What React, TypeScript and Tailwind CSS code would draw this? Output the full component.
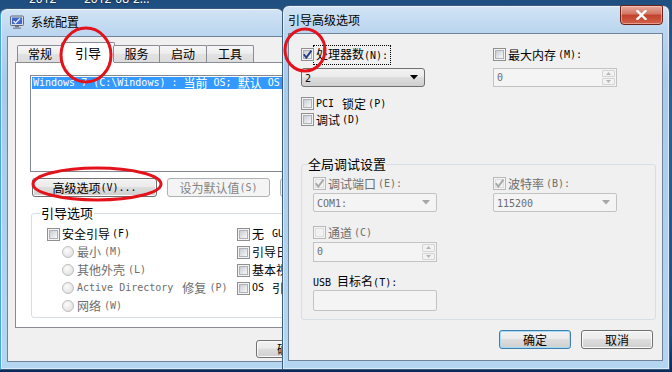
import React from "react";

const ASCII = /([\x20-\x7e]+)/;

// SimSun-like rendering: latin runs in a narrow mono face, CJK in Noto
function Tx({ s }: { s: string }) {
  return (
    <>
      {s.split(ASCII).map((p, i) =>
        i % 2 ? (
          <span key={i} className="whitespace-pre font-['DejaVu_Sans_Mono',monospace] text-[10px]">
            {p}
          </span>
        ) : (
          p
        )
      )}
    </>
  );
}

function Box({ on = false, off = false }: { on?: boolean; off?: boolean }) {
  return (
    <span
      className={`relative flex h-[13px] w-[13px] shrink-0 items-center justify-center border ${
        off ? "border-[#b8b8b8] bg-[#f4f4f4]" : "border-[#8e8f8f] bg-[#f4f4f4]"
      }`}
    >
      <span
        className={`h-[9px] w-[9px] border ${
          off
            ? "border-[#dedede] bg-[#f2f2f2]"
            : "border-[#aeb2b8] bg-[linear-gradient(135deg,#c9cdd3,#f7f7f7)]"
        }`}
      />
      {on && (
        <svg className="absolute left-0 top-0" width="11" height="11" viewBox="0 0 11 11">
          <path
            d="M1.8 5.2 L4.3 8.6 L9.4 1.6"
            fill="none"
            stroke={off ? "#a8a8a8" : "#2a3d86"}
            strokeWidth="1.9"
          />
        </svg>
      )}
    </span>
  );
}

function Radio() {
  return (
    <span className="h-[12px] w-[12px] shrink-0 rounded-full border border-[#bdbdbd] bg-[radial-gradient(circle_at_40%_35%,#fcfcfc,#dadada)]" />
  );
}

function Btn({
  className = "",
  dis = false,
  def = false,
  children,
}: {
  className?: string;
  dis?: boolean;
  def?: boolean;
  children: React.ReactNode;
}) {
  return (
    <div
      className={`flex shrink-0 items-center justify-center whitespace-nowrap rounded-[3px] border ${
        dis
          ? "border-[#adb2b5] bg-[#f4f4f4] text-[#838383]"
          : def
          ? "border-[#3c7fb1] bg-[linear-gradient(to_bottom,#f2f2f2,#ebebeb_45%,#dddddd_50%,#cfcfcf)] shadow-[inset_0_0_0_1px_#a6dbf6]"
          : "border-[#707070] bg-[linear-gradient(to_bottom,#f2f2f2,#ebebeb_45%,#dddddd_50%,#cfcfcf)] shadow-[inset_0_0_0_1px_#fbfbfb]"
      } ${className}`}
    >
      {children}
    </div>
  );
}

function Combo({ v, dis = false, className = "" }: { v: string; dis?: boolean; className?: string }) {
  return (
    <div
      className={`flex h-[19px] items-center justify-between pl-[3px] pr-[6px] ${
        dis
          ? "rounded-[2px] border border-[#c3c3c3] bg-[#f4f4f4] text-[#6d6d6d]"
          : "rounded-[3px] border border-[#707070] bg-[linear-gradient(to_bottom,#f2f2f2,#ebebeb_45%,#dddddd_50%,#cfcfcf)]"
      } ${className}`}
    >
      <span>
        <Tx s={v} />
      </span>
      <svg width="8" height="5" viewBox="0 0 8 5">
        <path d="M0 0H8L4 4.5Z" fill={dis ? "#a6a6a6" : "#000"} />
      </svg>
    </div>
  );
}

function Spin({ className = "" }: { className?: string }) {
  return (
    <div className={`flex border border-[#c3c3c3] bg-[#f4f4f4] text-[#6d6d6d] ${className}`}>
      <span className="flex flex-1 items-center pl-[3px]">
        <Tx s="0" />
      </span>
      <div className="flex w-[15px] flex-col gap-[1px] p-[1px]">
        <div className="flex flex-1 items-center justify-center rounded-[1px] border border-[#d4d4d4] bg-[#f2f2f2]">
          <svg width="5" height="3" viewBox="0 0 5 3">
            <path d="M0 3H5L2.5 0Z" fill="#b5b5b5" />
          </svg>
        </div>
        <div className="flex flex-1 items-center justify-center rounded-[1px] border border-[#d4d4d4] bg-[#f2f2f2]">
          <svg width="5" height="3" viewBox="0 0 5 3">
            <path d="M0 0H5L2.5 3Z" fill="#b5b5b5" />
          </svg>
        </div>
      </div>
    </div>
  );
}

function Row({ children, className = "" }: { children: React.ReactNode; className?: string }) {
  return <div className={`flex items-center whitespace-nowrap ${className}`}>{children}</div>;
}

const frame =
  "border border-[#3a5b7e] rounded-t-[7px] bg-[linear-gradient(to_bottom,#d2e4f5,#bcd6ef_24px,#a9cbea_70px,#b4d6f1)] shadow-[inset_0_0_0_1px_rgba(255,255,255,0.55)]";

function LeftWindow() {
  const tab =
    "flex h-[17px] mb-[1px] shrink-0 items-center justify-center border border-b-0 border-[#898c95] rounded-t-[2px] bg-[linear-gradient(to_bottom,#f7f7f7,#ececec_50%,#e2e2e2_50%,#dcdcdc)]";
  return (
    <div
      className={`absolute left-0 top-[8px] flex h-[362px] w-[284px] flex-col overflow-hidden ${frame} border-l-[#4aa6de]`}
    >
      <div className="flex h-[27px] shrink-0 items-center gap-[7px] pb-[2px] pl-[9px]">
        <svg width="14" height="14" viewBox="0 0 14 14">
          <rect x="0.5" y="1" width="13" height="9.5" rx="1" fill="#d9dde3" stroke="#5e6b7a" />
          <rect x="2" y="2.5" width="10" height="6.5" fill="#3f68c8" />
          <path d="M3.5 6 L5.5 8 L10 3.5" fill="none" stroke="#e8ecff" strokeWidth="1.3" />
          <rect x="5" y="11" width="4" height="1.5" fill="#6b7684" />
          <rect x="3" y="12.5" width="8" height="1.5" fill="#8994a3" />
        </svg>
        <span className="text-[12px]">系统配置</span>
      </div>
      <div className="mb-[7px] ml-[6px] -mr-[40px] flex-1 overflow-hidden border border-[#6f849a] bg-[#f0f0f0] pl-[7px] pt-[5px]">
        <div className="relative z-10 flex h-[21px] items-end pl-[2px]">
          <div className={`${tab} w-[46px]`}>常规</div>
          <div className="-mx-[2px] flex h-[21px] w-[54px] shrink-0 items-center justify-center border border-b-0 border-[#898c95] rounded-t-[2px] bg-white pb-[1px] text-[13px]">
            引导
          </div>
          <div className={`${tab} w-[47px]`}>服务</div>
          <div className={`${tab} -ml-[1px] w-[48px]`}>启动</div>
          <div className={`${tab} -ml-[1px] w-[48px]`}>工具</div>
        </div>
        <div className="-mt-[1px] h-[266px] w-[330px] border border-[#898c95] bg-white">
          <div className="ml-[14px] mt-[12px] h-[97px] w-[290px] border border-[#828790] bg-white pl-[1px] pt-[1px]">
            <div className="flex h-[12px] items-center whitespace-nowrap bg-[#3399ff] pl-[1px] leading-[12px] text-white">
              <Tx s={"Windows 7 (C:\\Windows) : 当前 OS; 默认 OS"} />
            </div>
          </div>
          <div className="ml-[16px] mt-[6px] flex gap-[10px]">
            <Btn className="h-[19px] w-[125px]">
              <Tx s="高级选项(V)..." />
            </Btn>
            <Btn dis className="h-[19px] w-[103px]">
              <Tx s="设为默认值(S)" />
            </Btn>
            <Btn dis className="h-[19px] w-[60px]">
              <Tx s="删除(D)" />
            </Btn>
          </div>
          <div className="relative ml-[15px] mt-[16px] h-[105px] w-[290px] rounded-[3px] border border-[#d5dfe5] pl-[15px] pt-[11px]">
            <span className="absolute -top-[8px] left-[8px] bg-white px-[1px] text-[13px]">引导选项</span>
            <div className="flex">
              <div className="w-[190px] shrink-0">
                <Row className="h-[18px] gap-[2px]">
                  <Box />
                  <Tx s="安全引导(F)" />
                </Row>
                {["最小(M)", "其他外壳(L)", "Active Directory 修复(P)", "网络(W)"].map((t) => (
                  <Row key={t} className="h-[18px] gap-[3px] pl-[15px] text-[#6d6d6d]">
                    <Radio />
                    <Tx s={t} />
                  </Row>
                ))}
              </div>
              <div>
                {["无 GUI 引导(N)", "引导日志(B)", "基本视频(E)", "OS 引导信息(O)"].map((t) => (
                  <Row key={t} className="h-[18px] gap-[2px]">
                    <Box />
                    <Tx s={t} />
                  </Row>
                ))}
              </div>
            </div>
          </div>
        </div>
        <div className="ml-[241px] mt-[12px] flex">
          <Btn className="h-[18px] w-[66px]">确定</Btn>
        </div>
      </div>
    </div>
  );
}

function RightWindow() {
  return (
    <div
      className={`absolute left-[282px] top-[5px] flex h-[365px] w-[388px] flex-col ${frame} shadow-[-1px_0_2px_rgba(0,0,0,0.5)]`}
    >
      <div className="relative flex h-[27px] items-center pl-[5px]">
        <span className="text-[12px]">引导高级选项</span>
        <div className="absolute right-[6px] -top-[1px] flex h-[20px] w-[43px] items-center justify-center rounded-b-[4px] rounded-t-[2px] border border-[#6b2219] bg-[linear-gradient(to_bottom,#e9a99b,#d27563_45%,#c2412c_50%,#d2614a)] shadow-[inset_0_0_0_1px_rgba(255,220,210,0.5)]">
          <svg width="11" height="10" viewBox="0 0 11 10">
            <path d="M1.5 1 L9.5 9 M9.5 1 L1.5 9" stroke="#fff" strokeWidth="2.4" strokeLinecap="square" />
          </svg>
        </div>
      </div>
      <div className="mb-[8px] ml-[5px] mr-[6px] flex-1 border border-[#6f849a] bg-[#f0f0f0] pl-[12px] pr-[9px] pt-[14px]">
        <div className="flex">
          <div className="w-[192px]">
            <Row className="h-[13px] gap-[1px]">
              <Box on />
              <span className="outline outline-1 outline-dotted outline-offset-[1px] outline-black px-[1px]">
                <Tx s="处理器数(N):" />
              </span>
            </Row>
            <Combo v="2" className="mt-[7px] w-[124px]" />
          </div>
          <div>
            <Row className="h-[13px] gap-[2px]">
              <Box />
              <Tx s="最大内存(M):" />
            </Row>
            <Spin className="mt-[7px] h-[19px] w-[124px]" />
          </div>
        </div>
        <Row className="mt-[10px] h-[13px] gap-[2px]">
          <Box />
          <Tx s="PCI 锁定(P)" />
        </Row>
        <Row className="mt-[3px] h-[13px] gap-[2px]">
          <Box />
          <Tx s="调试(D)" />
        </Row>
        <div className="relative mt-[38px] h-[156px] w-[355px] rounded-[3px] border border-[#d5dfe5] pl-[11px] pt-[12px] text-[#6d6d6d]">
          <span className="absolute -top-[8px] left-[6px] bg-[#f0f0f0] text-[13px] text-black">全局调试设置</span>
          <div className="flex">
            <div className="w-[180px]">
              <Row className="h-[13px] gap-[2px]">
                <Box on off />
                <Tx s="调试端口(E):" />
              </Row>
              <Combo dis v="COM1:" className="mt-[3px] w-[124px]" />
            </div>
            <div>
              <Row className="h-[13px] gap-[2px]">
                <Box on off />
                <Tx s="波特率(B):" />
              </Row>
              <Combo dis v="115200" className="mt-[3px] w-[124px]" />
            </div>
          </div>
          <Row className="mt-[14px] h-[13px] gap-[2px]">
            <Box off />
            <Tx s="通道(C)" />
          </Row>
          <Spin className="mt-[3px] h-[20px] w-[124px]" />
          <div className="mt-[12px] h-[14px] text-black">
            <Tx s="USB 目标名(T):" />
          </div>
          <div className="mt-[2px] h-[21px] w-[124px] rounded-[2px] border border-[#c3c3c3] bg-[#f4f4f4]" />
        </div>
        <div className="mt-[10px] flex justify-end gap-[10px]">
          <Btn def className="h-[19px] w-[72px]">
            确定
          </Btn>
          <Btn className="h-[19px] w-[72px]">取消</Btn>
        </div>
      </div>
    </div>
  );
}

export default function App() {
  return (
    <div className="relative h-[372px] w-[672px] overflow-hidden bg-[linear-gradient(to_bottom,#1f4e80,#2b6199_30%,#1d4d82_90%,#0a2a5a)] font-['Noto_Sans_CJK_SC',sans-serif] text-[12px] leading-[14px] text-black">
      <div className="absolute left-[29px] top-[-8px] font-['Noto_Sans',sans-serif] text-[12px] text-white [text-shadow:0_0_2px_#000]">
        2012
      </div>
      <div className="absolute left-[84px] top-[-8px] font-['Noto_Sans',sans-serif] text-[12px] text-white [text-shadow:0_0_2px_#000]">
        2012-08-2...
      </div>
      <LeftWindow />
      <RightWindow />
      <svg className="pointer-events-none absolute inset-0 z-50" width="672" height="372" viewBox="0 0 672 372">
        <ellipse cx="86" cy="55" rx="25" ry="27" fill="none" stroke="#e3121b" strokeWidth="3" />
        <ellipse cx="97" cy="184" rx="64" ry="16" fill="none" stroke="#e3121b" strokeWidth="3" />
        <ellipse cx="305" cy="50" rx="20" ry="21" fill="none" stroke="#e3121b" strokeWidth="3" />
      </svg>
    </div>
  );
}
